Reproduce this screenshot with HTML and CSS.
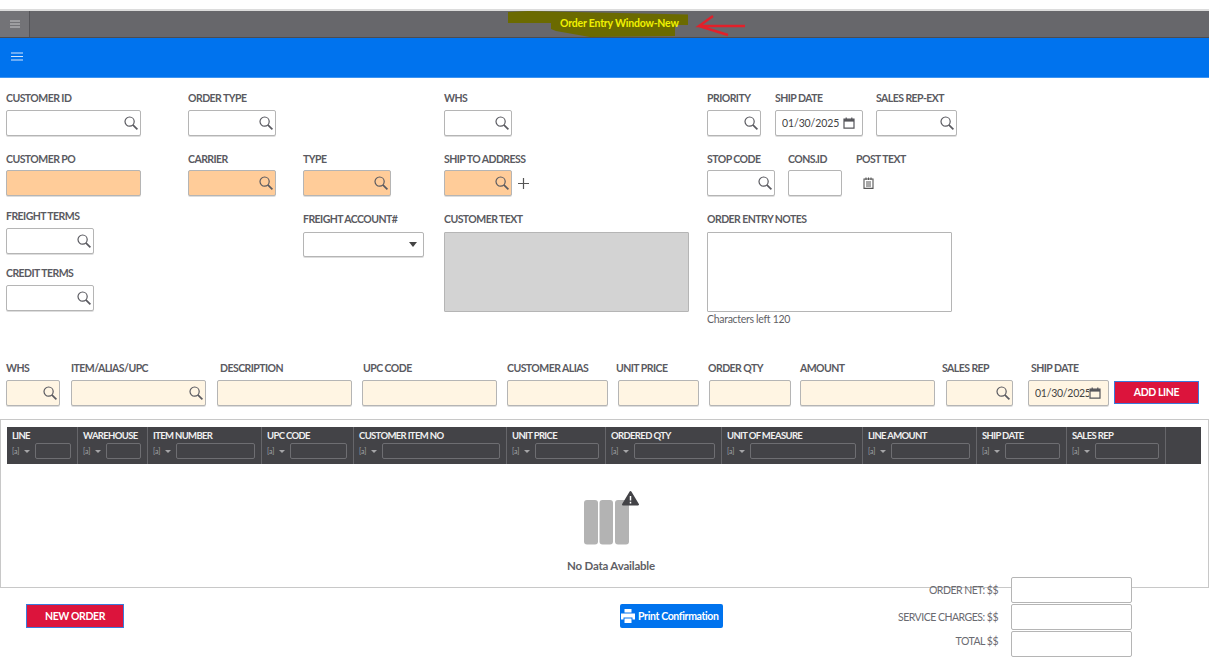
FILE: index.html
```html
<!DOCTYPE html>
<html lang="en">
<head>
<meta charset="utf-8">
<title>Order Entry Window-New</title>
<link rel="stylesheet" href="styles.css">
</head>
<body>
<svg class="defs" width="0" height="0" aria-hidden="true">
  <symbol id="search" viewBox="0 0 14 14"><circle cx="5.6" cy="5.6" r="4.6" fill="none" stroke="currentColor" stroke-width="1.2"/><path d="M8.8 8.8 13.4 13.4" fill="none" stroke="currentColor" stroke-width="1.7"/></symbol>
  <symbol id="cal" viewBox="0 0 12 12"><path d="M1 2.2h10v9H1zM3.2.5v2.400M8.8.5v2.400" fill="none" stroke="currentColor" stroke-width="1.2"/><path d="M1 2.200h10v2.400H1z" fill="currentColor"/></symbol>
</svg>
<div class="page">
  <header class="titlebar">
    <div class="title-menu"><svg width="10" height="8" viewBox="0 0 10 8"><path d="M0 1h10M0 4h10M0 7h10" stroke="#c9c9cb" stroke-width="1"/></svg></div>
    <svg class="highlight" width="200" height="28" viewBox="0 0 200 28"><path d="M8 1 28 0 188 3.500V14H175V25L90 26 56 20 51 18V12H8Z" fill="#6b6a00"/></svg>
    <span class="title-text">Order Entry Window-New</span>
    <svg class="arrow" width="52" height="26" viewBox="0 0 52 26"><path d="M50 13H4L18 3M4 13 33 22" fill="none" stroke="#e2202a" stroke-width="2.400"/></svg>
  </header>
  <div class="bluebar"><svg width="12" height="9" viewBox="0 0 12 9"><path d="M0 1h12M0 4.500h12M0 8h12" stroke="#d5e6fb" stroke-width="1"/></svg></div>

  <section class="form">
    <div class="col col-a">
      <div class="field r1"><label>CUSTOMER ID</label><div class="box w135"><input><svg class="ic"><use href="#search"/></svg></div></div>
      <div class="field r2"><label>CUSTOMER PO</label><div class="box w135 peach"><input></div></div>
      <div class="field r3"><label>FREIGHT TERMS</label><div class="box w88"><input><svg class="ic"><use href="#search"/></svg></div></div>
      <div class="field r4"><label>CREDIT TERMS</label><div class="box w88"><input><svg class="ic"><use href="#search"/></svg></div></div>
    </div>
    <div class="col col-b">
      <div class="field r1"><label>ORDER TYPE</label><div class="box w88"><input><svg class="ic"><use href="#search"/></svg></div></div>
      <div class="field r2"><label>CARRIER</label><div class="box w88 peach"><input><svg class="ic"><use href="#search"/></svg></div></div>
    </div>
    <div class="col col-c">
      <div class="field r1 ghost"></div>
      <div class="field r2"><label>TYPE</label><div class="box w88 peach"><input><svg class="ic"><use href="#search"/></svg></div></div>
      <div class="field r5"><label>FREIGHT ACCOUNT#</label><div class="box w121 select"><input><span class="caret"></span></div></div>
    </div>
    <div class="col col-d">
      <div class="field r1"><label>WHS</label><div class="box w68"><input><svg class="ic"><use href="#search"/></svg></div></div>
      <div class="field r2 ship-to"><label>SHIP TO ADDRESS</label><div class="with-plus"><div class="box w68 peach"><input><svg class="ic"><use href="#search"/></svg></div><svg class="plus" width="11" height="11" viewBox="0 0 11 11"><path d="M5.500 0v11M0 5.500h11" stroke="#555" stroke-width="1.200"/></svg></div></div>
      <div class="field r5"><label>CUSTOMER TEXT</label><div class="area grey"></div></div>
    </div>
    <div class="col col-e">
      <div class="row r1">
        <div class="field"><label>PRIORITY</label><div class="box w54"><input><svg class="ic"><use href="#search"/></svg></div></div>
        <div class="field"><label>SHIP DATE</label><div class="box w88 date"><input value="01/30/2025"><svg class="cal"><use href="#cal"/></svg></div></div>
        <div class="field"><label>SALES REP-EXT</label><div class="box w81"><input><svg class="ic"><use href="#search"/></svg></div></div>
      </div>
      <div class="row r2 row-2">
        <div class="field"><label>STOP CODE</label><div class="box w68"><input><svg class="ic"><use href="#search"/></svg></div></div>
        <div class="field"><label>CONS.ID</label><div class="box w54"><input></div></div>
        <div class="field"><label>POST TEXT</label><svg class="note" width="11" height="12" viewBox="0 0 11 12"><path d="M1 2h9v9.400H1zM3 5h5M3 7h5M3 9h5M3 .5v2.500M5.500 .5v2.500M8 .5v2.500" fill="none" stroke="#555" stroke-width="1.100"/></svg></div>
      </div>
      <div class="field notes"><label>ORDER ENTRY NOTES</label><div class="area"></div><small>Characters left 120</small></div>
    </div>
  </section>

  <section class="entry">
    <div class="entry-labels">
      <label>WHS</label><label>ITEM/ALIAS/UPC</label><label>DESCRIPTION</label><label>UPC CODE</label><label>CUSTOMER ALIAS</label><label>UNIT PRICE</label><label>ORDER QTY</label><label>AMOUNT</label><label>SALES REP</label><label>SHIP DATE</label>
    </div>
    <div class="entry-inputs">
      <div class="box cream"><input><svg class="ic"><use href="#search"/></svg></div>
      <div class="box cream"><input><svg class="ic"><use href="#search"/></svg></div>
      <div class="box cream"><input></div>
      <div class="box cream"><input></div>
      <div class="box cream"><input></div>
      <div class="box cream"><input></div>
      <div class="box cream"><input></div>
      <div class="box cream"><input></div>
      <div class="box cream"><input><svg class="ic"><use href="#search"/></svg></div>
      <div class="box cream date2"><input value="01/30/2025"><svg class="cal"><use href="#cal"/></svg></div>
      <button class="btn add">ADD LINE</button>
    </div>
  </section>

  <section class="grid-panel">
    <div class="grid-head">
      <div class="th"><b>LINE</b><div class="flt"><i>[a]</i><span class="mini"></span><input></div></div>
      <div class="th"><b>WAREHOUSE</b><div class="flt"><i>[a]</i><span class="mini"></span><input></div></div>
      <div class="th"><b>ITEM NUMBER</b><div class="flt"><i>[a]</i><span class="mini"></span><input></div></div>
      <div class="th"><b>UPC CODE</b><div class="flt"><i>[a]</i><span class="mini"></span><input></div></div>
      <div class="th"><b>CUSTOMER ITEM NO</b><div class="flt"><i>[a]</i><span class="mini"></span><input></div></div>
      <div class="th"><b>UNIT PRICE</b><div class="flt"><i>[a]</i><span class="mini"></span><input></div></div>
      <div class="th"><b>ORDERED QTY</b><div class="flt"><i>[a]</i><span class="mini"></span><input></div></div>
      <div class="th"><b>UNIT OF MEASURE</b><div class="flt"><i>[a]</i><span class="mini"></span><input></div></div>
      <div class="th"><b>LINE AMOUNT</b><div class="flt"><i>[a]</i><span class="mini"></span><input></div></div>
      <div class="th"><b>SHIP DATE</b><div class="flt"><i>[a]</i><span class="mini"></span><input></div></div>
      <div class="th"><b>SALES REP</b><div class="flt"><i>[a]</i><span class="mini"></span><input></div></div>
    </div>
    <div class="empty">
      <svg width="60" height="57" viewBox="0 0 60 57">
        <rect x="4" y="12" width="14" height="44.500" rx="3" fill="#b3b3b3"/><rect x="19.500" y="12" width="13.500" height="44.500" rx="3" fill="#b3b3b3"/><rect x="35" y="12" width="14" height="44.500" rx="3" fill="#b3b3b3"/>
        <path d="M50.500 4 58 16.500H43Z" fill="#434347" stroke="#434347" stroke-width="2" stroke-linejoin="round"/>
        <path d="M50.500 8v4.500M50.500 13.700v1.800" stroke="#fff" stroke-width="1.500"/>
      </svg>
      <p>No Data Available</p>
    </div>
  </section>

  <footer class="foot">
    <button class="btn new">NEW ORDER</button>
    <button class="print"><svg width="14" height="14" viewBox="0 0 14 14"><path d="M3.500 0h7v3.500h-7zM0 4.500h14v6h-2.500V8.500h-9v2H0zM3.500 9.500h7V14h-7z" fill="#fff"/></svg>Print Confirmation</button>
    <div class="totals">
      <div class="total"><span>ORDER NET: $$</span><input></div>
      <div class="total"><span>SERVICE CHARGES: $$</span><input></div>
      <div class="total"><span>TOTAL $$</span><input></div>
    </div>
  </footer>
</div>
</body>
</html>
```

FILE: styles.css
```css
* { box-sizing: border-box; }
html, body { margin: 0; padding: 0; background: #fff; }
body { width: 1214px; height: 667px; overflow: hidden; font-family: Lato, "Noto Sans", sans-serif; color: #5f5f66; font-size: 10.500px; letter-spacing: -.3px; }
.defs { position: absolute; }
.page { width: 1209px; padding-top: 9px; }
input { font: inherit; letter-spacing: inherit; color: #444; border: 0; background: transparent; outline: 0; min-width: 0; padding: 0; }
label { display: block; font-weight: 700; font-size: 10.500px; line-height: 14px; letter-spacing: -.55px; color: #5a5a61; white-space: nowrap; }

.titlebar { position: relative; height: 29px; display: flex; background: #67676b; border-top: 2px solid #dcdcdc; border-bottom: 1px solid #4c4c50; }
.title-menu { width: 30px; display: flex; align-items: center; justify-content: center; background: #737377; border-right: 1px solid #545458; }
.highlight { position: absolute; left: 500px; top: 0; }
.title-text { position: absolute; left: 560px; top: 5px; color: #f1f100; font-weight: 700; font-size: 10.500px; line-height: 14px; letter-spacing: -.2px; }
.arrow { position: absolute; left: 695px; top: 2px; }
.bluebar { height: 40px; background: #0073ee; display: flex; align-items: center; padding: 0 0 2px 11px; border-bottom: 1px solid #3d94f2; }

.form { display: flex; height: 279px; padding: 13px 0 0 6px; }
.col { display: flex; flex-direction: column; }
.col-a { width: 182px; }
.col-b { width: 115px; }
.col-c { width: 141px; }
.col-d { width: 263px; }
.col-e { width: 300px; }
.field label { margin-bottom: 4px; }
.r1 { height: 61px; }
.r1 label { margin-bottom: 5px; }
.r2 { height: 57px; }
.r3 { height: 57px; }
.r3 label, .r4 label { margin-bottom: 5px; }
.r5 { margin-top: 3px; }
.r5 label { margin-bottom: 6px; }
.ghost { visibility: hidden; }
.row { display: flex; }
.row > .field:nth-child(1) { width: 68px; }
.row > .field:nth-child(2) { width: 101px; }
.row-2 { height: 60px; }
.row-2 > .field:nth-child(1) { width: 81px; }
.row-2 > .field:nth-child(2) { width: 68px; }
.notes label { margin-bottom: 6px; }

.box { height: 26px; display: flex; align-items: center; background: #fff; border: 1px solid #b5b5b5; border-radius: 2px; box-shadow: 0 1px 0 #ddd; }
.box input { flex: 1; width: 100%; height: 100%; padding-left: 6px; }
.select { height: 25px; }
.w135 { width: 135px; } .w121 { width: 121px; } .w88 { width: 88px; } .w81 { width: 81px; } .w68 { width: 68px; } .w54 { width: 54px; }
.peach { background: #ffcc99; }
.cream { background: #fff5e3; }
.ic { width: 14px; height: 14px; margin-right: 2px; flex: none; color: #5a5a60; }
.cal { width: 12px; height: 12px; margin-right: 7px; flex: none; color: #55555a; }
.caret { border: 4px solid transparent; border-top: 5px solid #444; border-bottom: 0; margin-right: 6px; }
.date input, .date2 input { padding-left: 6px; font-size: 10.500px; letter-spacing: -.1px; }
.date2 input { letter-spacing: -.25px; }
.date2 .cal { margin-right: 7px; }
.with-plus { display: flex; align-items: center; gap: 6px; }
.plus { flex: none; }
.note { display: block; margin: 11px 0 0 7px; }
.area { width: 245px; height: 80px; border: 1px solid #b5b5b5; border-radius: 1px; background: #fff; }
.grey { background: #d3d3d3; }
small { display: block; margin-top: 0; font-size: 10.500px; line-height: 14px; }

.entry { padding: 0 0 0 6px; height: 58px; margin-top: 4px; }
.entry-labels { display: grid; grid-template-columns: 65px 149px 143px 144px 109px 92px 92px 142px 89px auto; height: 14px; margin-bottom: 5px; }
.entry-labels label { margin: 0; }
.entry-inputs { display: grid; grid-template-columns: 65px 146px 145px 145px 111px 91px 91px 146px 82px 86px 84px; align-items: start; }
.entry-inputs > :nth-child(1) { width: 54px; }
.entry-inputs > :nth-child(2), .entry-inputs > :nth-child(3), .entry-inputs > :nth-child(4), .entry-inputs > :nth-child(8) { width: 135px; }
.entry-inputs > :nth-child(5) { width: 101px; }
.entry-inputs > :nth-child(6), .entry-inputs > :nth-child(10) { width: 81px; }
.entry-inputs > :nth-child(7) { width: 82px; }
.entry-inputs > :nth-child(9) { width: 67px; }
.btn { height: 23px; border: 1px solid #3a7bdc; background: #dc143c; color: #fff; font: 700 10.500px/1 Lato, sans-serif; letter-spacing: -.4px; padding: 0; }
.add { width: 85px; margin-top: 1px; }

.grid-panel { height: 169px; width: 1209px; border: 1px solid #c8c8c8; padding: 7px 6px 0; }
.grid-head { display: grid; grid-template-columns: 71px 70px 114px 92px 153px 99px 116px 141px 114px 90px 99px 35px; height: 37px; width: 1194px; background: #434347; }
.th { padding: 2px 6px 0 5px; border-right: 1px solid #66666a; }
.th b { display: block; font-size: 9.500px; line-height: 13px; letter-spacing: -.65px; color: #f0f0f0; white-space: nowrap; }
.flt { display: flex; align-items: center; margin-top: 1px; }
.flt i { font-style: normal; font-size: 7px; letter-spacing: 0; color: #a5a5a8; width: 12px; flex: none; }
.mini { border: 3px solid transparent; border-top: 3px solid #a5a5a8; border-bottom: 0; flex: none; margin-right: 5px; }
.flt input { flex: 1; height: 16px; border: 1px solid #6e6e72; border-radius: 2px; width: 100%; }
.empty { display: flex; flex-direction: column; align-items: center; padding: 24px 0 0 13px; }
.empty svg { display: block; margin-right: 3px; }
.empty p { margin: 13px 0 0; font-size: 11.500px; font-weight: 700; line-height: 16px; letter-spacing: -.2px; color: #5f5f66; }

.foot { display: flex; align-items: flex-start; margin-top: -11px; padding-left: 26px; }
.new { width: 98px; height: 24px; margin-top: 27px; }
.print { width: 103px; height: 24px; margin: 27px 0 0 496px; display: flex; align-items: center; gap: 3px; background: #0073ee; border: 0; border-radius: 2px; color: #fff; font: 700 10.500px/1 Lato, sans-serif; letter-spacing: -.35px; padding: 0 0 0 1px; white-space: nowrap; }
.totals { width: 401px; margin-left: 8px; display: flex; flex-direction: column; gap: 1px; }
.total { display: flex; justify-content: flex-end; align-items: center; gap: 13px; height: 26px; }
.total:nth-child(3) span { padding-bottom: 6px; }
.total span { font-size: 10.500px; letter-spacing: -.5px; color: #6a6a70; }
.total input { width: 121px; height: 26px; flex: none; background: #fff; border: 1px solid #b5b5b5; border-radius: 2px; }
```
